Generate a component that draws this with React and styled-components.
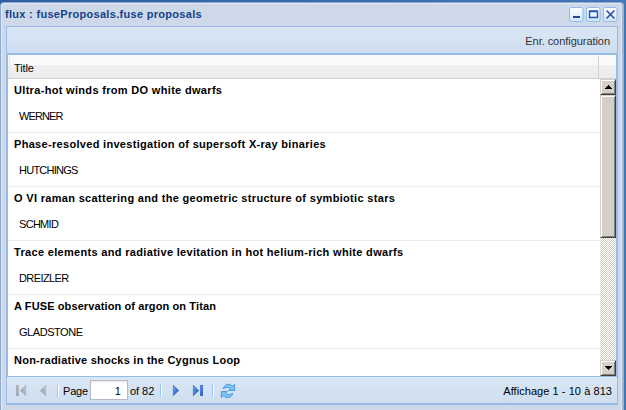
import React from 'react';
import styled, { createGlobalStyle } from 'styled-components';

const Global = createGlobalStyle`
  * { box-sizing: border-box; }
  body { margin: 0; background: #3d6eb0; font: 11px/14px "Liberation Sans", Arial, sans-serif; color: #000; overflow: hidden; }
`;
const Desktop = styled.div`
  width: 626px; height: 410px; padding: 2px 2px 0 0;
  background: linear-gradient(90deg, #2f5e9f, #4477b8);
`;
const Win = styled.div`
  height: 408px; padding: 0 4px 5px 5px;
  display: flex; flex-direction: column;
  background: #cdd9e8;
  border: 1px solid #8fa9cf; border-width: 1px 2px 0 1px; border-right-color: #a3b2c8;
  border-radius: 4px 4px 0 0;
  box-shadow: inset 1px 1px 0 #dfe8f3, inset -1px 0 0 #dfe8f3;
`;
const TitleBar = styled.header`
  height: 23px; display: flex; align-items: center; padding: 0 0 1px 0;
  color: #15428b;
`;
const Label = styled.span`
  white-space: nowrap;
  font-weight: ${p => (p.$bold ? 700 : 400)};
  letter-spacing: ${p => p.$track || 0}px;
`;
const WindowTitle = styled.h1`
  margin: 0 0 0 -1px; font: inherit;
`;
const Tools = styled.div`display: flex; gap: 2px; margin-left: auto; padding-top: 1px;`;
const Frame = styled.main`
  flex: 1; min-height: 0; display: flex; flex-direction: column;
  border: solid #99bbe8; border-width: 1px 1px 2px 1px;
`;
const TopBar = styled.div`
  height: 26px; display: flex; align-items: center; justify-content: flex-end; padding: 2px 7px 0 0;
  background: linear-gradient(#dae6f4, #cddef0); color: #333;
`;
const Grid = styled.section`
  flex: 1; min-height: 0; display: flex; flex-direction: column;
  border: solid #99bbe8; border-width: 2px 1px 1px 1px; background: #fff;
`;
const Head = styled.div`
  height: 24px; flex: none; display: flex; padding: 1px 0 0 1px;
  background: linear-gradient(#f9f9f9 0 10px, #efeff0 10px, #ebecee);
  border-bottom: 1px solid #d0d0d0;
`;
const HeadCell = styled.div`
  width: 590px; padding: 5px 0 0 4px;
  border-left: 1px solid #e6e6e6; border-right: 1px solid #d0d0d0;
`;
const Body = styled.div`flex: 1; min-height: 0; display: flex; overflow: hidden;`;
const Rows = styled.div`flex: 1; overflow: hidden;`;
const Row = styled.article`
  height: 54px; padding: 4px 0 0 6px; border-bottom: 1px solid #ededed;
`;
const Author = styled.div`padding: 12px 0 0 5px;`;
const Scroll = styled.aside`
  width: 16px; display: flex; flex-direction: column;
  background: repeating-conic-gradient(#fff 0 25%, #d4d0c8 0 50%) 0 0 / 2px 2px;
`;
const Bevel = styled.div`
  flex: none; height: ${p => p.$h}px; margin-top: ${p => (p.$last ? 'auto' : 0)};
  display: grid; place-items: center; background: #d4d0c8;
  border: 1px solid; border-color: #d4d0c8 #404040 #404040 #d4d0c8;
  box-shadow: inset 1px 1px 0 #fff, inset -1px -1px 0 #808080;
`;
const Pager = styled.footer`
  height: 26px; flex: none; display: flex; align-items: center; padding: 1px 5px 0 7px;
  background: linear-gradient(#d9e6f4, #cfdff0);
`;
const Slot = styled.span`display: flex; width: ${p => p.$w}px; flex: none;`;
const Sep = styled.i`
  width: 2px; height: 13px; flex: none; background: linear-gradient(90deg, #98c8ff 50%, #fff 50%);
`;
const PageField = styled.input`
  width: 38px; height: 20px; margin: -1px 2px 0; padding: 2px 6px 0 0; text-align: right;
  font: 11px "Liberation Sans", Arial, sans-serif; border: 1px solid #b5b8c8; border-radius: 0; outline: 0; background: linear-gradient(#eee, #fff 3px);
`;
const Status = styled.div`margin-left: auto; padding-top: 1px;`;

const Tool = ({ children }) => (
  <svg width="15" height="15" viewBox="0 0 15 15" fill="none">
    <defs><linearGradient id="tool" x2="0" y2="1"><stop stopColor="#fff" /><stop offset="1" stopColor="#cce6fc" /></linearGradient></defs>
    <rect x=".5" y=".5" width="13.5" height="14" rx="2" fill="url(#tool)" stroke="#91bbea" />
    {children}
  </svg>
);
const Arrow = ({ off, bar, flip }) => (
  <svg width="13" height="14" viewBox="0 0 13 14">
    <defs>
      <linearGradient id="on" x2="1" y2="1"><stop stopColor="#79b5f4" /><stop offset="1" stopColor="#0c3dbb" /></linearGradient>
      <linearGradient id="off" x2="1" y2="1"><stop stopColor="#c8cdd3" /><stop offset="1" stopColor="#8c929b" /></linearGradient>
    </defs>
    <g fill={off ? 'url(#off)' : 'url(#on)'} stroke={off ? '#a5abb3' : '#2c60c8'} strokeWidth=".6" transform={flip ? 'translate(13) scale(-1 1)' : undefined}>
      <path d="M1.3 1.3 6.7 6.5 1.3 11.7Z" />
      {bar && <rect x="8.3" y="1.3" width="2.4" height="10.4" />}
    </g>
  </svg>
);
const Refresh = () => (
  <svg width="16" height="16" viewBox="0 0 16 16">
    <g fill="#7cc8f8" stroke="#2f86d8" strokeWidth=".8" strokeLinejoin="round">
      <path d="M3.2 5.6C4.2 2.4 6.8.8 9.6 1.5c1.3.4 2 1 2.6 1.8L14.6 1.6V7.4H8.6l1.9-2C8.9 3.8 6.6 4 3.2 5.6Z" />
      <path d="M12.8 10.4C11.8 13.6 9.2 15.2 6.4 14.5c-1.3-.4-2-1-2.6-1.8L1.4 14.4V8.6h6l-1.9 2C7.1 12.2 9.4 12 12.8 10.4Z" />
    </g>
  </svg>
);
const Tri = ({ down }) => (
  <svg width="7" height="4" viewBox="0 0 7 4" shapeRendering="crispEdges"><path d={down ? 'M0 0H7L3.5 4Z' : 'M0 4H7L3.5 0Z'} /></svg>
);

const proposals = [
  ['Ultra-hot winds from DO white dwarfs', 'WERNER', 0.32, -0.9],
  ['Phase-resolved investigation of supersoft X-ray binaries', 'HUTCHINGS', 0.31, -0.75],
  ['O VI raman scattering and the geometric structure of symbiotic stars', 'SCHMID', 0.32, -0.7],
  ['Trace elements and radiative levitation in hot helium-rich white dwarfs', 'DREIZLER', 0.32, -0.6],
  ['A FUSE observation of argon on Titan', 'GLADSTONE', 0.11, -0.45],
  ['Non-radiative shocks in the Cygnus Loop', '', 0.24, 0],
];

export default function App() {
  return (
    <Desktop>
      <Global />
      <Win>
        <TitleBar>
          <WindowTitle><Label $bold $track={0.3}>flux : fuseProposals.fuse proposals</Label></WindowTitle>
          <Tools>
            <Tool><path d="M4 10h7" stroke="#2345a0" strokeWidth="2" /></Tool>
            <Tool><path d="M3.5 4.5h8v6h-8zM3 4h9" stroke="#2951ae" strokeWidth="1.4" /></Tool>
            <Tool><path d="m3.5 3.5 8 8m0-8-8 8" stroke="#2f4f9a" strokeWidth="1.6" /></Tool>
          </Tools>
        </TitleBar>
        <Frame>
          <TopBar><Label $track={-0.05}>Enr. configuration</Label></TopBar>
          <Grid>
            <Head><HeadCell><Label $track={-0.1}>Title</Label></HeadCell></Head>
            <Body>
              <Rows>
                {proposals.map(([title, author, a, b]) => (
                  <Row key={title}>
                    <Label $bold $track={a}>{title}</Label>
                    <Author><Label $track={b}>{author}</Label></Author>
                  </Row>
                ))}
              </Rows>
              <Scroll>
                <Bevel $h={16}><Tri /></Bevel>
                <Bevel $h={143} />
                <Bevel $h={16} $last><Tri down /></Bevel>
              </Scroll>
            </Body>
          </Grid>
          <Pager>
            <Slot $w={20}><Arrow off bar flip /></Slot>
            <Slot $w={23}><Arrow off flip /></Slot>
            <Sep />
            <Slot $w={4} />
            <Label $track={-0.2}>Page</Label>
            <PageField defaultValue="1" />
            <Label>of 82</Label>
            <Slot $w={6} />
            <Sep />
            <Slot $w={10} />
            <Slot $w={20}><Arrow /></Slot>
            <Slot $w={20}><Arrow bar /></Slot>
            <Sep />
            <Slot $w={6} />
            <Refresh />
            <Status><Label $track={0.06}>Affichage 1 - 10 à 813</Label></Status>
          </Pager>
        </Frame>
      </Win>
    </Desktop>
  );
}
